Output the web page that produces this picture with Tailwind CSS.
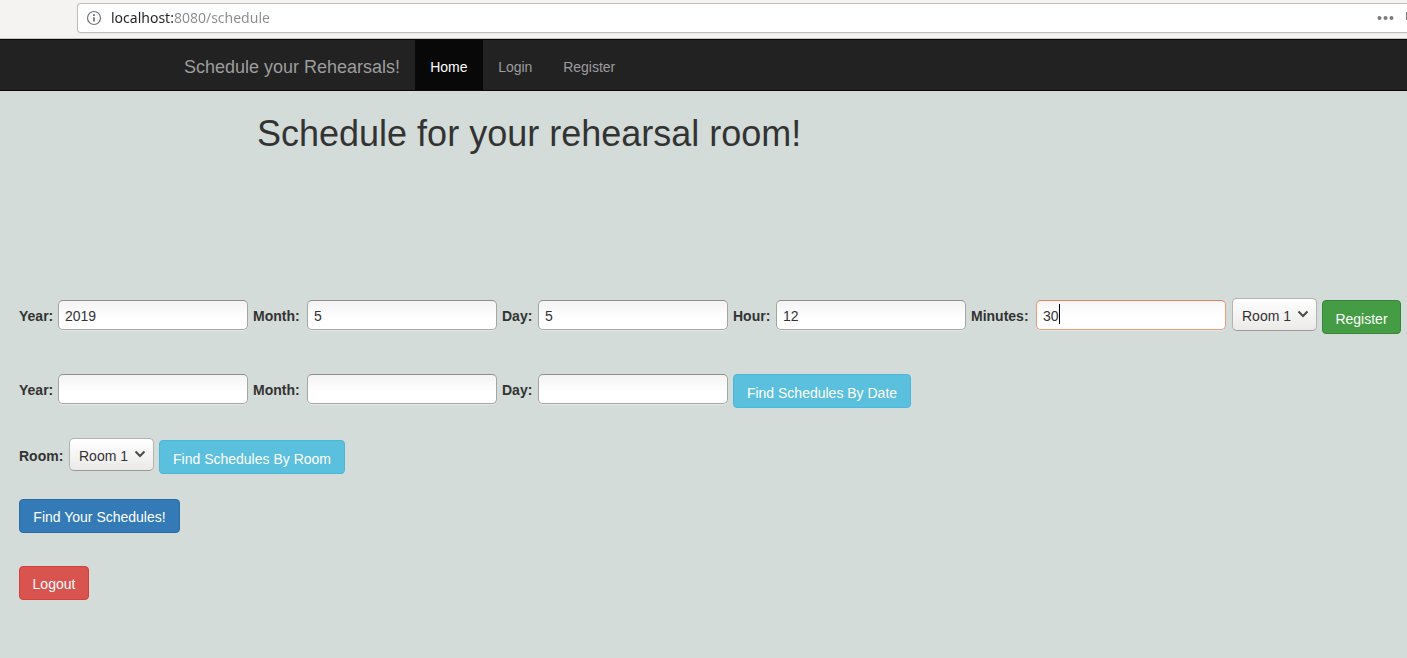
<!DOCTYPE html>
<html lang="en">
<head>
<meta charset="utf-8">
<meta name="viewport" content="width=device-width, initial-scale=1">
<title>Schedule your Rehearsals!</title>
<script src="https://cdn.jsdelivr.net/npm/@tailwindcss/browser@4"></script>
</head>
<body class="min-h-screen overflow-x-hidden bg-[#d3dcd9] font-['Liberation_Sans',Arial,sans-serif] text-sm leading-5 text-[#333]">
<div class="flex h-[39px] border-b border-[#c6c4c1] bg-[#f4f3f1] pt-[3px] pl-[77px]">
  <div class="flex h-[30px] grow items-center rounded-l-[4px] border border-r-0 border-[#c0bfbd] bg-white pl-2 shadow-xs">
    <svg class="size-4 shrink-0" viewBox="0 0 16 16" fill="none" aria-hidden="true"><circle cx="8" cy="8" r="6.5" stroke="#757575" stroke-width="1.2"/><path d="M8 7.2v4.3M8 4.3v1.7" stroke="#757575" stroke-width="1.8"/></svg>
    <input aria-label="Address" value="localhost:8080/schedule" class="ml-[9px] w-60 bg-linear-to-r from-[#222] from-[62px] to-[#8c8c8c] to-[62px] bg-clip-text font-['Noto_Sans',sans-serif] text-sm text-transparent outline-none">
    <button aria-label="Page actions" class="mr-3 ml-auto"><svg class="h-4 w-[17px]" viewBox="0 0 17 16" fill="#7b7b7b"><circle cx="2.5" cy="8" r="2"/><circle cx="8.5" cy="8" r="2"/><circle cx="14.5" cy="8" r="2"/></svg></button>
    <span class="mb-1 h-2 w-px bg-[#777]"></span>
  </div>
</div>
<nav class="flex h-[52px] border-y border-[#080808] bg-[#222] pl-[169px] text-[#9d9d9d]">
  <a href="#" class="px-[15px] py-[17px] text-lg leading-5">Schedule your Rehearsals!</a>
  <a href="#" class="w-[68px] bg-[#080808] px-[15px] py-[17px] text-white">Home</a>
  <a href="#" class="w-[65px] px-[15px] py-[17px]">Login</a>
  <a href="#" class="px-[15px] py-[17px]">Register</a>
</nav>
<main class="pt-[23px] pl-[19px]">
  <h1 class="pl-[238px] text-4xl leading-10">Schedule for your rehearsal room!</h1>
  <form class="mt-36 flex h-9 items-start gap-[5px] whitespace-nowrap">
    <label for="y1" class="mt-2 w-[34px] font-bold">Year:</label>
    <input id="y1" value="2019" class="mt-[2px] h-[30px] w-[190px] rounded-[5px] border border-[#a5a5a3] border-t-[#8e8f8d] bg-linear-to-b from-[#f3f3f3] to-white to-60% px-1.5 pt-px shadow-[0_1px_0_#e4eae7]">
    <label for="m1" class="mt-2 w-[49px] font-bold">Month:</label>
    <input id="m1" value="5" class="mt-[2px] h-[30px] w-[190px] rounded-[5px] border border-[#a5a5a3] border-t-[#8e8f8d] bg-linear-to-b from-[#f3f3f3] to-white to-60% px-1.5 pt-px shadow-[0_1px_0_#e4eae7]">
    <label for="d1" class="mt-2 w-[31px] font-bold">Day:</label>
    <input id="d1" value="5" class="mt-[2px] h-[30px] w-[190px] rounded-[5px] border border-[#a5a5a3] border-t-[#8e8f8d] bg-linear-to-b from-[#f3f3f3] to-white to-60% px-1.5 pt-px shadow-[0_1px_0_#e4eae7]">
    <label for="h1" class="mt-2 w-[38px] font-bold">Hour:</label>
    <input id="h1" value="12" class="mt-[2px] h-[30px] w-[190px] rounded-[5px] border border-[#a5a5a3] border-t-[#8e8f8d] bg-linear-to-b from-[#f3f3f3] to-white to-60% px-1.5 pt-px shadow-[0_1px_0_#e4eae7]">
    <label for="mi" class="mt-2 w-[60px] font-bold">Minutes:</label>
    <div class="relative mt-[2px]">
      <input id="mi" value="30" class="block h-[30px] w-[190px] rounded-[5px] border border-[#eb9a7a] border-t-[#e5835c] bg-linear-to-b from-[#f7f7f7] to-white to-60% px-1.5 pt-px shadow-[0_1px_0_#e4eae7]">
      <span class="absolute top-1 left-[23px] h-5 w-px bg-black"></span>
    </div>
    <div class="relative ml-px">
      <select aria-label="Room" class="block h-[33px] w-[85px] appearance-none rounded-[5px] border border-[#b5b3b1] border-b-[#999] bg-linear-to-b from-white to-[#ebeae9] pt-[2px] pl-[9px]"><option>Room 1</option></select>
      <svg class="pointer-events-none absolute top-3 right-2 h-2 w-3" viewBox="0 0 12 8" fill="none" aria-hidden="true"><path d="M1.5 1.5 6 6l4.5-4.5" stroke="#4a4a4a" stroke-width="2"/></svg>
    </div>
    <button type="button" class="mt-[2px] h-[34px] w-[79px] rounded-[4px] border border-[#398439] bg-[#449d44] pt-[3px] text-white">Register</button>
  </form>
  <form class="mt-[38px] flex h-9 items-start gap-[5px] whitespace-nowrap">
    <label for="y2" class="mt-2 w-[34px] font-bold">Year:</label>
    <input id="y2" class="mt-[2px] h-[30px] w-[190px] rounded-[5px] border border-[#a5a5a3] border-t-[#8e8f8d] bg-linear-to-b from-[#f3f3f3] to-white to-60% px-1.5 pt-px shadow-[0_1px_0_#e4eae7]">
    <label for="m2" class="mt-2 w-[49px] font-bold">Month:</label>
    <input id="m2" class="mt-[2px] h-[30px] w-[190px] rounded-[5px] border border-[#a5a5a3] border-t-[#8e8f8d] bg-linear-to-b from-[#f3f3f3] to-white to-60% px-1.5 pt-px shadow-[0_1px_0_#e4eae7]">
    <label for="d2" class="mt-2 w-[31px] font-bold">Day:</label>
    <input id="d2" class="mt-[2px] h-[30px] w-[190px] rounded-[5px] border border-[#a5a5a3] border-t-[#8e8f8d] bg-linear-to-b from-[#f3f3f3] to-white to-60% px-1.5 pt-px shadow-[0_1px_0_#e4eae7]">
    <button type="button" class="mt-[2px] h-[34px] w-[178px] rounded-[4px] border border-[#46b8da] bg-[#5bc0de] pt-[3px] text-white">Find Schedules By Date</button>
  </form>
  <form class="mt-[30px] flex h-9 items-start gap-[5px] whitespace-nowrap">
    <label for="r" class="mt-2 w-[45px] font-bold">Room:</label>
    <div class="relative">
      <select id="r" class="block h-[33px] w-[85px] appearance-none rounded-[5px] border border-[#b5b3b1] border-b-[#999] bg-linear-to-b from-white to-[#ebeae9] pt-[2px] pl-[9px]"><option>Room 1</option></select>
      <svg class="pointer-events-none absolute top-3 right-2 h-2 w-3" viewBox="0 0 12 8" fill="none" aria-hidden="true"><path d="M1.5 1.5 6 6l4.5-4.5" stroke="#4a4a4a" stroke-width="2"/></svg>
    </div>
    <button type="button" class="mt-[2px] h-[34px] w-[186px] rounded-[4px] border border-[#46b8da] bg-[#5bc0de] pt-[3px] text-white">Find Schedules By Room</button>
  </form>
  <button type="button" class="mt-[25px] block h-[34px] w-[161px] rounded-[4px] border border-[#2e6da4] bg-[#337ab7] pt-px text-white">Find Your Schedules!</button>
  <button type="button" class="mt-[33px] block h-[34px] w-[70px] rounded-[4px] border border-[#d43f3a] bg-[#d9534f] pt-px text-white">Logout</button>
</main>
</body>
</html>
